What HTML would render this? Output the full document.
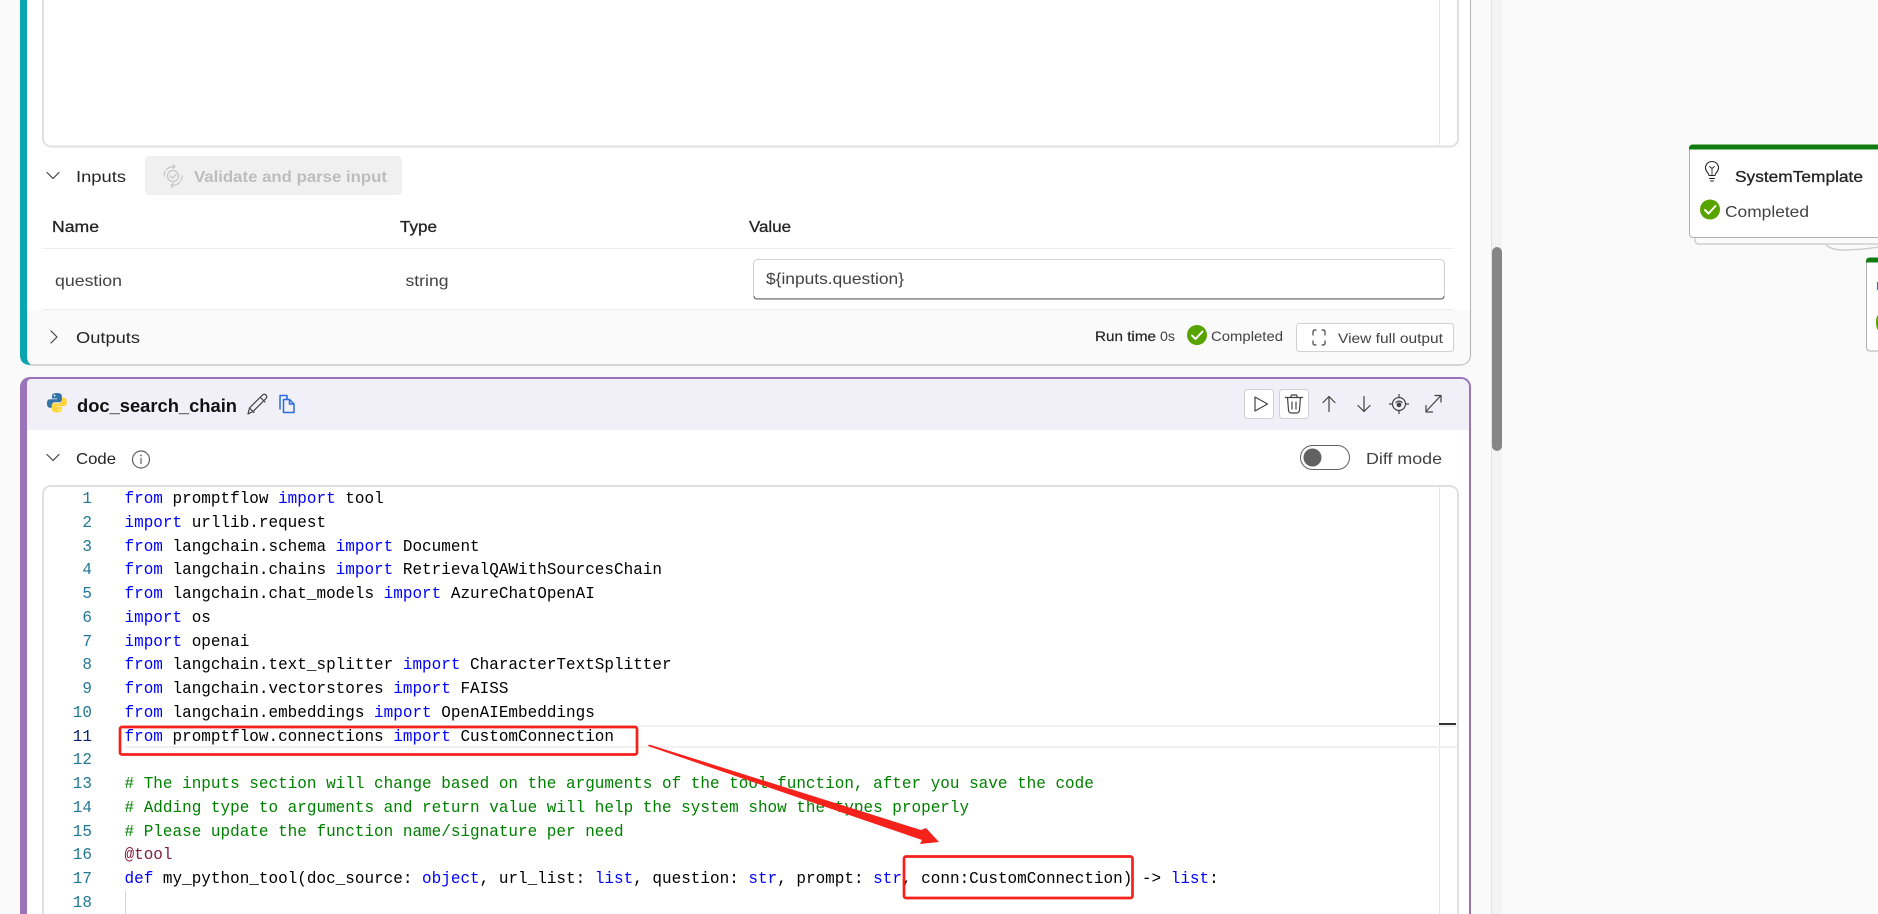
<!DOCTYPE html>
<html><head><meta charset="utf-8"><title>Flow editor</title>
<style>
html,body{margin:0;padding:0;background:#fafafa;overflow:hidden;width:1878px;height:914px}
svg{display:block}
text{font-family:"Liberation Sans",sans-serif;font-size:16px;fill:#242424}
.s{stroke:#242424;stroke-width:.3px}
.g{fill:#424242}
.m text{font-family:"Liberation Mono",monospace;font-size:17px;fill:#000;white-space:pre}
.m text.n{fill:#237893;text-anchor:end}
.k{fill:#0000ff}.t{fill:#008000}
.i{fill:none;stroke:#424242;stroke-width:1.2;stroke-linecap:round;stroke-linejoin:round}
</style></head><body>
<svg width="1878" height="914" viewBox="0 0 1878 914" xmlns="http://www.w3.org/2000/svg" xml:space="preserve">
<rect width="1878" height="914" fill="#fafafa"/>

<!-- scrollbar -->
<rect x="1491" y="0" width="1" height="914" fill="#e3e3e3"/>
<rect x="1492" y="0" width="10" height="914" fill="#f3f3f3"/>
<rect x="1492" y="247" width="10" height="204" rx="5" fill="#868686"/>

<!-- card 1 -->
<path d="M20 0H1470.500V355a10 10 0 0 1-10 10H30a10 10 0 0 1-10-10Z" fill="#fff"/>
<path d="M27 310H1470V355a10 10 0 0 1-10 10H30Q27 362 27 358Z" fill="#fafafa"/>
<path d="M1470.500 0V355a10 10 0 0 1-10 10H30" fill="none" stroke="#b3b3b3"/>
<path d="M20 0H27V356Q27 362 31 365H29Q20 364 20 355Z" fill="#0aa6af"/>
<path d="M43 0V138.500a8 8 0 0 0 8 8H1450a8 8 0 0 0 8-8V0" fill="#fff" stroke="#e0e0e0" stroke-width="2"/>
<rect x="1439" y="0" width="1" height="145" fill="#e6e6e6"/>

<!-- inputs -->
<path class="i" d="M47 172.500l6 6 6-6" stroke-width="1.3"/>
<text x="76" y="182" textLength="50" lengthAdjust="spacingAndGlyphs">Inputs</text>
<rect x="145" y="156" width="257" height="39" rx="4" fill="#f0f0f0"/>
<g fill="none" stroke="#c4c4c4" stroke-width="1.2" stroke-linecap="round" stroke-linejoin="round">
<circle cx="173" cy="176" r="5.500"/>
<path d="M166 170a9 9 0 0 1 7.500-3.200M180 182a9 9 0 0 1-7.500 3.200M164 176a9 9 0 0 1 1-4.200M182 176a9 9 0 0 1-1 4.200M173 164.500l2 2-2 2M173 183.500l-2 2 2 2M170.500 176l2 2 3.500-3.500"/>
</g>
<text x="194" y="182" textLength="193" lengthAdjust="spacingAndGlyphs" font-weight="700" style="fill:#bdbdbd">Validate and parse input</text>

<text class="s" x="52" y="232" textLength="47" lengthAdjust="spacingAndGlyphs">Name</text>
<text class="s" x="400" y="232" textLength="37" lengthAdjust="spacingAndGlyphs">Type</text>
<text class="s" x="749" y="232" textLength="42" lengthAdjust="spacingAndGlyphs">Value</text>
<rect x="42" y="248" width="1412" height="1" fill="#ededed"/>
<text class="g" x="55" y="286" textLength="67" lengthAdjust="spacingAndGlyphs">question</text>
<text class="g" x="405.500" y="286" textLength="43" lengthAdjust="spacingAndGlyphs">string</text>
<rect x="753.500" y="259.500" width="691" height="39" rx="4" fill="#fff" stroke="#d1d1d1"/>
<path d="M754 296q0 3 3 3H1441q3 0 3-3" fill="none" stroke="#616161"/>
<text x="766" y="284" textLength="138" lengthAdjust="spacingAndGlyphs" class="g">${inputs.question}</text>
<rect x="42" y="309" width="1412" height="1" fill="#ededed"/>

<!-- outputs -->
<path class="i" d="M51 331l6 6-6 6" stroke-width="1.3"/>
<text x="76" y="343" textLength="64" lengthAdjust="spacingAndGlyphs">Outputs</text>
<text class="s" x="1095" y="341" textLength="61" lengthAdjust="spacingAndGlyphs" style="font-size:14px;stroke-width:.2px">Run time</text>
<text x="1160" y="341" textLength="15" lengthAdjust="spacingAndGlyphs" style="font-size:14px;fill:#424242">0s</text>
<circle cx="1197" cy="335" r="10" fill="#57a300"/>
<path d="M1192 335.500l3.500 3.500 7-7.500" fill="none" stroke="#fff" stroke-width="2" stroke-linecap="round" stroke-linejoin="round"/>
<text class="g" x="1211" y="341" textLength="72" lengthAdjust="spacingAndGlyphs" style="font-size:14px">Completed</text>
<rect x="1296.500" y="323.500" width="157" height="28" rx="3" fill="#fff" stroke="#d1d1d1"/>
<path class="i" d="M1313 335v-3q0-2 2-2h1M1322 330h1q2 0 2 2v3M1325 341v2q0 2-2 2h-1M1316 345h-1q-2 0-2-2v-2" stroke-width="1.300"/>
<text class="g" x="1338" y="343" textLength="105" lengthAdjust="spacingAndGlyphs" style="font-size:14px">View full output</text>

<!-- card 2 -->
<path d="M20 914V387a10 10 0 0 1 10-10H1461a10 10 0 0 1 10 10V914Z" fill="#9a73bb"/>
<path d="M27 914V384q0-5 5-5H1461a8 8 0 0 1 8 8V914Z" fill="#fff"/>
<path d="M27 430V384q0-5 5-5H1461a8 8 0 0 1 8 8V430Z" fill="#f1eff7"/>

<!-- python logo -->
<path d="M56.800 393c-4.500 0-4.800 2-4.800 3.200V398.500h5.200v.8H49.800c-1.800 0-2.800 1.500-2.800 4.200 0 2.800 1.100 4.200 2.800 4.200h2V405.200c0-1.700 1.400-3 3-3h4.600c1.400 0 2.500-1.100 2.500-2.500v-3.500C61.900 394 60 393 56.800 393Z" fill="#3572a5"/>
<path d="M57 412.500c4.500 0 4.800-2 4.800-3.200V407h-5.200v-.8h7.400c1.800 0 2.800-1.500 2.800-4.200 0-2.800-1.100-4.200-2.800-4.200h-2v2.500c0 1.700-1.400 3-3 3h-4.600c-1.400 0-2.500 1.100-2.500 2.500v3.500C51.900 411.500 53.800 412.500 57 412.500Z" fill="#ffd43b"/>
<circle cx="54.500" cy="395.600" r=".9" fill="#fff"/><circle cx="59.300" cy="409.900" r=".9" fill="#fff"/>

<text x="77" y="412" textLength="160" lengthAdjust="spacingAndGlyphs" font-weight="700" style="font-size:18px;fill:#111">doc_search_chain</text>
<path class="i" d="M248 414l1.500-6 13-13q2-1.500 3.500 0t0 3.500l-13 13Zm1.500-6l4.500 4.500M260.500 397.500l4.500 4.500"/>
<path d="M280 409.500V395.500h7l0 3h-1M283.500 399.500h6l4.500 4.500v8.500H283.500Zm6 0v4.500h4.500" fill="none" stroke="#2a6ee0" stroke-width="1.500" stroke-linejoin="round"/>

<!-- toolbar buttons -->
<rect x="1244.500" y="389.500" width="29" height="29" rx="3" fill="#fff" stroke="#d1d1d1"/>
<path class="i" d="M1255 397v14l12.500-7Z" stroke-width="1.200"/>
<rect x="1279.500" y="389.500" width="29" height="29" rx="3" fill="#fff" stroke="#d1d1d1"/>
<path class="i" d="M1285.500 397.500h17M1290.500 397.500l1-2.500h5l1 2.500M1287.500 397.500l1 12.500q.2 3 3 3h5q2.800 0 3-3l1-12.500M1292 402v7M1296 402v7" stroke-width="1.200"/>
<path class="i" d="M1329 411.500V396.500M1323 402.500l6-6 6 6" stroke-width="1.200"/>
<path class="i" d="M1364 396.500V411.500M1358 405.500l6 6 6-6" stroke-width="1.200"/>
<g class="i" stroke-width="1.200"><circle cx="1399" cy="404" r="6.500"/><path d="M1399 394.500v3M1399 410.500v3M1389.500 404h3M1405.500 404h3"/><circle cx="1399" cy="404.800" r="1.800" fill="#424242"/><path d="M1396 402.500a4 4 0 0 1 6 0"/></g>
<path class="i" d="M1426 411.500l14-15M1435 395.500h6v6.500M1426 405.500v6.500h6.500" stroke-width="1.100"/>

<!-- code row -->
<path class="i" d="M47 454.500l6 6 6-6" stroke-width="1.300"/>
<text x="76" y="464" textLength="40" lengthAdjust="spacingAndGlyphs">Code</text>
<circle cx="141" cy="459.500" r="8.500" fill="none" stroke="#616161" stroke-width="1.200"/>
<rect x="140.400" y="458" width="1.200" height="6" fill="#616161"/><circle cx="141" cy="455.500" r=".9" fill="#616161"/>
<rect x="1300.500" y="445.500" width="49" height="24" rx="12" fill="#fff" stroke="#616161"/>
<circle cx="1312.500" cy="457.500" r="9" fill="#616161"/>
<text x="1366" y="464" textLength="76" lengthAdjust="spacingAndGlyphs" class="g">Diff mode</text>

<!-- editor -->
<path d="M43 914V494a8 8 0 0 1 8-8H1450a8 8 0 0 1 8 8V914" fill="#fff" stroke="#e0e0e0" stroke-width="2"/>
<rect x="1439" y="487" width="1" height="427" fill="#e6e6e6"/>
<rect x="125" y="725" width="1332" height="2" fill="#f0f0f0"/>
<rect x="125" y="746" width="1332" height="2" fill="#f0f0f0"/>
<rect x="1439" y="723" width="17" height="2" fill="#333"/>
<rect x="125" y="891" width="1" height="23" fill="#d3d3d3"/>

<g class="m" transform="scale(.9412,1)">
<!-- line numbers -->
<text class="n" x="97.700" y="503">1</text><text class="n" x="97.700" y="527">2</text><text class="n" x="97.700" y="551">3</text>
<text class="n" x="97.700" y="574">4</text><text class="n" x="97.700" y="598">5</text><text class="n" x="97.700" y="622">6</text>
<text class="n" x="97.700" y="646">7</text><text class="n" x="97.700" y="669">8</text><text class="n" x="97.700" y="693">9</text>
<text class="n" x="97.700" y="717">10</text><text class="n" x="97.700" y="741" style="fill:#0b216f">11</text><text class="n" x="97.700" y="764">12</text>
<text class="n" x="97.700" y="788">13</text><text class="n" x="97.700" y="812">14</text><text class="n" x="97.700" y="836">15</text>
<text class="n" x="97.700" y="859">16</text><text class="n" x="97.700" y="883">17</text><text class="n" x="97.700" y="907">18</text>
<!-- code -->
<text x="132.300" y="503"><tspan class="k">from</tspan> promptflow <tspan class="k">import</tspan> tool</text>
<text x="132.300" y="527"><tspan class="k">import</tspan> urllib.request</text>
<text x="132.300" y="551"><tspan class="k">from</tspan> langchain.schema <tspan class="k">import</tspan> Document</text>
<text x="132.300" y="574"><tspan class="k">from</tspan> langchain.chains <tspan class="k">import</tspan> RetrievalQAWithSourcesChain</text>
<text x="132.300" y="598"><tspan class="k">from</tspan> langchain.chat_models <tspan class="k">import</tspan> AzureChatOpenAI</text>
<text x="132.300" y="622"><tspan class="k">import</tspan> os</text>
<text x="132.300" y="646"><tspan class="k">import</tspan> openai</text>
<text x="132.300" y="669"><tspan class="k">from</tspan> langchain.text_splitter <tspan class="k">import</tspan> CharacterTextSplitter</text>
<text x="132.300" y="693"><tspan class="k">from</tspan> langchain.vectorstores <tspan class="k">import</tspan> FAISS</text>
<text x="132.300" y="717"><tspan class="k">from</tspan> langchain.embeddings <tspan class="k">import</tspan> OpenAIEmbeddings</text>
<text x="132.300" y="741"><tspan class="k">from</tspan> promptflow.connections <tspan class="k">import</tspan> CustomConnection</text>
<text x="132.300" y="788"><tspan class="t"># The inputs section will change based on the arguments of the tool function, after you save the code</tspan></text>
<text x="132.300" y="812"><tspan class="t"># Adding type to arguments and return value will help the system show the types properly</tspan></text>
<text x="132.300" y="836"><tspan class="t"># Please update the function name/signature per need</tspan></text>
<text x="132.300" y="859"><tspan style="fill:#811f3f">@tool</tspan></text>
<text x="132.300" y="883"><tspan class="k">def</tspan> my_python_tool(doc_source: <tspan class="k">object</tspan>, url_list: <tspan class="k">list</tspan>, question: <tspan class="k">str</tspan>, prompt: <tspan class="k">str</tspan>, conn:CustomConnection) -&gt; <tspan class="k">list</tspan>:</text>
</g>

<!-- annotations -->
<rect x="120" y="727" width="517" height="27.500" rx="2" fill="none" stroke="#f5211b" stroke-width="2.700"/>
<rect x="904" y="856.500" width="228.500" height="41.500" rx="2" fill="none" stroke="#f5211b" stroke-width="2.700"/>
<polygon points="649,744.500 921,830 926,828 939,842 920,844 922,840 648,746" fill="#f5211b"/>

<!-- graph nodes -->
<path d="M1695 238v2q0 4 4 4H1878" fill="none" stroke="#cfcfcf" stroke-width="1.500"/>
<path d="M1826 245q6 5 16 5 20 0 36-3" fill="#fafafa" stroke="#cfcfcf" stroke-width="1.500"/>
<path d="M1689.500 149q0-4 4-4H1880V237.500H1693.500q-4 0-4-4Z" fill="#fff" stroke="#b0b0b0"/>
<path d="M1689 149.500v-1q0-4 4-4H1878v5Z" fill="#107c10"/>
<g fill="none" stroke="#242424" stroke-width="1.100" stroke-linecap="round" stroke-linejoin="round">
<path d="M1709 175.500c0-3-3.500-3.500-3.500-7.500a6.500 6.500 0 0 1 13 0c0 4-3.500 4.500-3.500 7.500ZM1709.500 178.500h5M1710.500 181h3"/>
<path d="M1712 168.500v6M1709.500 166.500l2.500 2 2.500-2" stroke-width=".9"/>
</g>
<text class="s" x="1735" y="182" textLength="128" lengthAdjust="spacingAndGlyphs">SystemTemplate</text>
<circle cx="1710" cy="209.500" r="10" fill="#57a300"/>
<path d="M1705 210l3.500 3.500 7-7.500" fill="none" stroke="#fff" stroke-width="2" stroke-linecap="round" stroke-linejoin="round"/>
<text class="g" x="1725" y="217" textLength="84" lengthAdjust="spacingAndGlyphs">Completed</text>
<path d="M1866.500 262q0-4 4-4H1880V351H1870.500q-4 0-4-4Z" fill="#fff" stroke="#b0b0b0"/>
<path d="M1866 262.500v-1q0-4 4-4H1878v5Z" fill="#107c10"/>
<rect x="1877" y="282" width="1" height="8" fill="#2a6ab0"/>
<path d="M1878 315q-2 2-2 7.500t2 7.500Z" fill="#57a300"/>
</svg>
</body></html>
